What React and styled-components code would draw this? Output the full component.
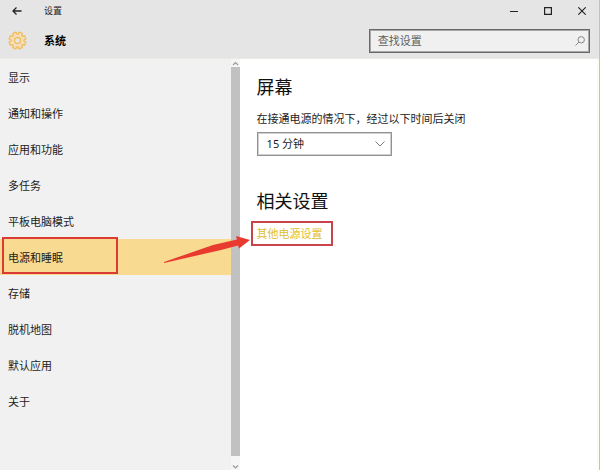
import React, { useState } from "react";
import styled, { createGlobalStyle, css } from "styled-components";

const GlobalStyle = createGlobalStyle`
  *, *::before, *::after { box-sizing: border-box; }
  body { margin: 0; }
  body, button, input, select {
    font-family: "Noto Sans", "Noto Sans CJK SC", sans-serif;
    font-size: 11px;
    line-height: 16px;
    color: #1c1c1c;
  }
  h1, h2, p, ul { margin: 0; padding: 0; }
`;

const Window = styled.div`
  display: flex;
  flex-direction: column;
  min-height: 100vh;
  background: #fff;
  border-right: 1px solid #d2c48e;
`;

const Header = styled.header`
  background: #e5e5e5;
  border-bottom: 1px solid #ebe9e2;
`;

const TitleBar = styled.div`
  display: flex;
  align-items: center;
  height: 21px;
`;

const IconButton = styled.button`
  display: flex;
  align-items: center;
  justify-content: center;
  width: 34px;
  height: 21px;
  padding: 0;
  border: 0;
  background: transparent;
  color: #222;
`;

const WindowTitle = styled.span`
  flex: 1;
  padding-left: 10px;
  font-size: 9px;
`;

const PageBar = styled.div`
  display: flex;
  align-items: center;
  height: 37px;
  padding: 2px 9px 0 8px;
`;

const PageTitle = styled.h1`
  flex: 1;
  padding-left: 17px;
  font-size: 11px;
  line-height: 16px;
  font-weight: 700;
  color: #000;
`;

const SearchBox = styled.label`
  display: flex;
  align-items: center;
  width: 38%;
  height: 24px;
  padding: 0 4px 0 7px;
  border: 1px solid #686868;
  outline: 1px solid #a8a8a8;
  outline-offset: -2px;
  background: #f0f0f0;
`;

const SearchInput = styled.input`
  flex: 1;
  min-width: 0;
  padding: 0 1px;
  border: 0;
  outline: 0;
  background: transparent;
  &::placeholder { color: #606060; opacity: 1; }
`;

const Body = styled.div`
  display: flex;
  flex: 1;
`;

const Sidebar = styled.aside`
  display: flex;
  width: 40%;
  background: #f1f1f1;
`;

const NavList = styled.ul`
  flex: 1;
  list-style: none;
`;

const NavItem = styled.li`
  position: relative;
`;

const NavLink = styled.a`
  display: flex;
  align-items: center;
  height: 36px;
  padding: 2px 0 0 8px;
  color: #1c1c1c;
  text-decoration: none;
  background: ${(p) => (p.$active ? "#f8da90" : "transparent")};
`;

const frame = css`
  position: absolute;
  border: 2px solid ${(p) => p.$color};
  pointer-events: none;
`;

const NavFrame = styled.span`
  ${frame}
  inset: -2px auto 1px 2px;
  width: 116px;
`;

const ScrollTrack = styled.div`
  display: flex;
  flex-direction: column;
  align-items: center;
  width: 9px;
  background: #f6f6f6;
`;

const ScrollThumb = styled.div`
  flex: 1;
  width: 9px;
  background: #c1c1c1;
`;

const ScrollArrow = styled.svg`
  width: 7px;
  height: 7px;
  margin-top: ${(p) => (p.$end ? 7 : 1)}px;
`;

const Content = styled.main`
  flex: 1;
  padding: 15px 16px 16px 17px;
  border-right: 2px solid #fffde9;
`;

const Section = styled.section`
  margin-bottom: 32px;
`;

const SectionTitle = styled.h2`
  font-size: 18px;
  line-height: 26px;
  font-weight: 400;
  color: #111;
`;

const FieldLabel = styled.label`
  display: block;
  margin: 11px 0 5px;
`;

const SelectWrap = styled.div`
  position: relative;
  width: 135px;
`;

const Select = styled.select`
  appearance: none;
  display: block;
  width: 100%;
  height: 24px;
  padding: 0 24px 0 9px;
  border: 1px solid #929292;
  outline: 1px solid #cfcfcf;
  outline-offset: -2px;
  border-radius: 0;
  background: #fff;
`;

const SelectChevron = styled.svg`
  position: absolute;
  right: 7px;
  top: 9px;
  pointer-events: none;
`;

const LinkLine = styled.div`
  position: relative;
  width: fit-content;
  margin-top: 12px;
`;

const TextLink = styled.a`
  display: block;
  color: #e2bd2b;
  text-decoration: none;
`;

const LinkFrame = styled.span`
  ${frame}
  inset: -5px -10px -4px -6px;
`;

const Arrow = styled.svg`
  position: absolute;
  right: calc(100% + 7px);
  top: 9px;
  pointer-events: none;
`;

const navItems = [
  "显示", "通知和操作", "应用和功能", "多任务", "平板电脑模式",
  "电源和睡眠", "存储", "脱机地图", "默认应用", "关于",
];

const gearPath = (() => {
  const points = [];
  const teeth = 8;
  for (let i = 0; i < teeth; i += 1) {
    [[-0.31, 6.8], [-0.2, 9], [0.2, 9], [0.31, 6.8]].forEach(([offset, r]) => {
      const a = ((i + 0.5) / teeth) * Math.PI * 2 + offset;
      points.push(`${(10 + r * Math.cos(a)).toFixed(2)} ${(10 + r * Math.sin(a)).toFixed(2)}`);
    });
  }
  return `M${points.join("L")}Z`;
})();

function Gear() {
  return (
    <svg width="19" height="19" viewBox="0 0 20 20" fill="none" stroke="#f0bd63" strokeWidth="1.4" strokeLinejoin="round" aria-hidden="true">
      <path d={gearPath} fill="#f4e0b8" />
      <circle cx="10" cy="10" r="3.200" fill="#e8e5df" />
    </svg>
  );
}

export default function App() {
  const [active, setActive] = useState("电源和睡眠");
  return (
    <>
      <GlobalStyle />
      <Window>
        <Header>
          <TitleBar>
            <IconButton aria-label="返回">
              <svg width="10" height="8" viewBox="0 0 10 8" fill="none" stroke="currentColor" strokeWidth="1.3"><path d="M9.5 4H1M4.5 .5 1 4l3.500 3.500" /></svg>
            </IconButton>
            <WindowTitle>设置</WindowTitle>
            <IconButton aria-label="最小化">
              <svg width="8" height="8" viewBox="0 0 8 8" stroke="currentColor"><path d="M0 4.500h8" /></svg>
            </IconButton>
            <IconButton aria-label="最大化">
              <svg width="8" height="8" viewBox="0 0 8 8" fill="none" stroke="currentColor" strokeWidth="1.2"><path d="M.6 .6h6.800v6.800H.6z" /></svg>
            </IconButton>
            <IconButton aria-label="关闭">
              <svg width="8" height="8" viewBox="0 0 8 8" stroke="currentColor" strokeWidth="1.1"><path d="M.3 .3l7.400 7.400M7.700 .3.3 7.700" /></svg>
            </IconButton>
          </TitleBar>
          <PageBar>
            <Gear />
            <PageTitle>系统</PageTitle>
            <SearchBox>
              <SearchInput type="text" placeholder="查找设置" aria-label="查找设置" />
              <svg width="10" height="10" viewBox="0 0 10 10" fill="none" stroke="#858585" aria-hidden="true"><circle cx="6.200" cy="3.800" r="3.200" /><path d="M4 6 .5 9.500" /></svg>
            </SearchBox>
          </PageBar>
        </Header>
        <Body>
          <Sidebar>
            <NavList>
              {navItems.map((name) => (
                <NavItem key={name}>
                  <NavLink
                    href="#"
                    $active={name === active}
                    aria-current={name === active ? "page" : undefined}
                    onClick={(e) => { e.preventDefault(); setActive(name); }}
                  >
                    {name}
                  </NavLink>
                  {name === "电源和睡眠" && <NavFrame $color="#dc3b35" />}
                </NavItem>
              ))}
            </NavList>
            <ScrollTrack aria-hidden="true">
              <ScrollArrow viewBox="0 0 7 7" fill="none" stroke="#999" strokeWidth="1.2"><path d="M1 5l2.500-2.500L6 5" /></ScrollArrow>
              <ScrollThumb />
              <ScrollArrow $end viewBox="0 0 7 7" fill="none" stroke="#999" strokeWidth="1.2"><path d="M1 2.500l2.500 2.500L6 2.500" /></ScrollArrow>
            </ScrollTrack>
          </Sidebar>
          <Content>
            <Section>
              <SectionTitle>屏幕</SectionTitle>
              <FieldLabel htmlFor="screen-off">在接通电源的情况下，经过以下时间后关闭</FieldLabel>
              <SelectWrap>
                <Select id="screen-off" defaultValue="15">
                  <option value="15">15 分钟</option>
                  <option value="30">30 分钟</option>
                </Select>
                <SelectChevron width="10" height="6" viewBox="0 0 10 6" fill="none" stroke="#777"><path d="M.5 .5 5 5 9.500 .5" /></SelectChevron>
              </SelectWrap>
            </Section>
            <Section>
              <SectionTitle>相关设置</SectionTitle>
              <LinkLine>
                <TextLink href="#">其他电源设置</TextLink>
                <LinkFrame $color="#c9434b" />
                <Arrow width="87" height="30" viewBox="0 0 87 30" aria-hidden="true">
                  <path d="M1 27 50 10 74 4.500 73 1 87 5 76 13.500 75 10.500 58 15 1 28Z" fill="#e93a30" />
                </Arrow>
              </LinkLine>
            </Section>
          </Content>
        </Body>
      </Window>
    </>
  );
}
